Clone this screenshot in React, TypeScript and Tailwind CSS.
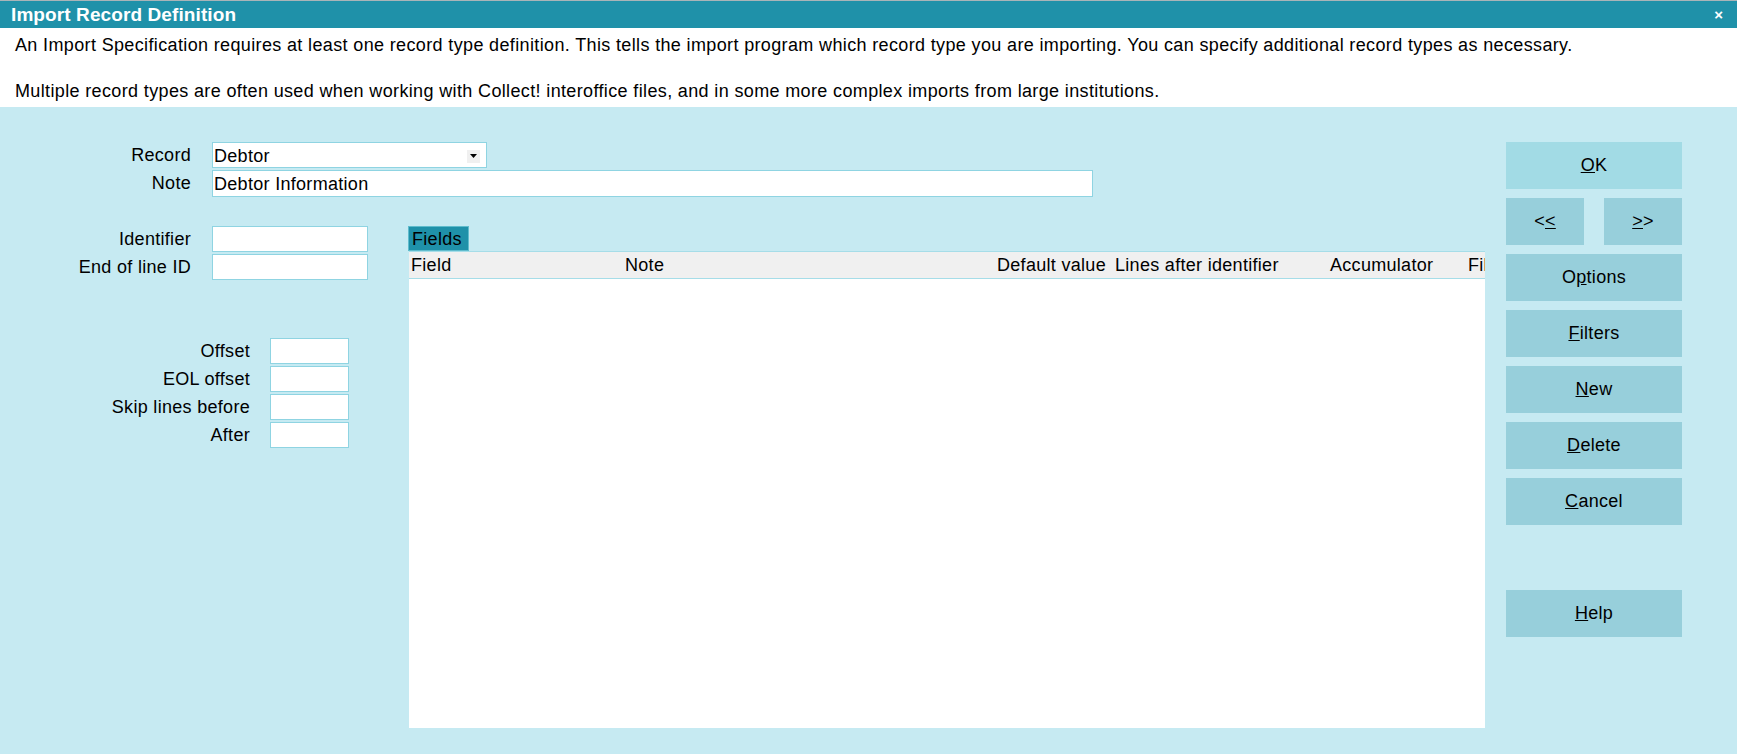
const font = { fontFamily: '"Liberation Sans", Arial, sans-serif' };

function Field({ w }: { w: string }) {
  return <div className={`h-[26px] ${w} bg-white border border-[#8fd4e2]`} />;
}

function Btn({ children, light }: { children: React.ReactNode; light?: boolean }) {
  return (
    <div
      className={`h-[47px] flex items-center justify-center text-[18px] tracking-[0.3px] text-black ${
        light ? "bg-[#a2dbe5]" : "bg-[#97cfdb]"
      }`}
    >
      {children}
    </div>
  );
}

export default function App() {
  return (
    <div className="w-[1737px] h-[754px] flex flex-col bg-[#c6eaf2] overflow-hidden" style={font}>
      {/* title bar */}
      <div className="h-[28px] border-t border-[#a9b4b8] bg-[#1f91a9] flex items-center justify-between px-[11px]">
        <span className="text-white font-bold text-[19px] tracking-[0.1px] leading-none">Import Record Definition</span>
        <span className="text-white font-bold text-[15px] leading-none mr-[3px]">×</span>
      </div>

      {/* description */}
      <div className="h-[79px] bg-white px-[15px] pt-[6px] text-[18px] leading-[23px] tracking-[0.36px] text-black">
        <p>
          An Import Specification requires at least one record type definition. This tells the import program which record type you are
          importing. You can specify additional record types as necessary.
        </p>
        <p className="mt-[23px]">
          Multiple record types are often used when working with Collect! interoffice files, and in some more complex imports from large
          institutions.
        </p>
      </div>

      {/* body */}
      <div className="flex-1 flex pt-[35px] pb-[26px]">
        <div className="flex-1 flex flex-col text-[18px] leading-[22px] tracking-[0.3px] text-black">
          <div className="flex items-center h-[26px]">
            <span className="w-[191px] text-right">Record</span>
            <div className="ml-[21px] h-[26px] w-[275px] bg-white border border-[#8fd4e2] flex items-center justify-between pl-[1px] pr-[6px] pt-[2px]">
              <span>Debtor</span>
              <span className="w-[13px] h-[13px] bg-[#f0f0f0] flex items-center justify-center">
                <svg width="7" height="4" viewBox="0 0 7 4">
                  <path d="M0 0h7L3.5 4z" fill="#000" />
                </svg>
              </span>
            </div>
          </div>
          <div className="flex items-center h-[26px] mt-[2px]">
            <span className="w-[191px] text-right">Note</span>
            <div className="ml-[21px] h-[27px] w-[881px] bg-white border border-[#8fd4e2] flex items-center pl-[1px] pt-[2px]">
              Debtor Information
            </div>
          </div>

          <div className="flex flex-1 mt-[30px]">
            {/* left column */}
            <div className="w-[408px] flex flex-col">
              <div className="flex items-center h-[26px]">
                <span className="w-[191px] text-right">Identifier</span>
                <div className="ml-[21px]">
                  <Field w="w-[156px]" />
                </div>
              </div>
              <div className="flex items-center h-[26px] mt-[2px]">
                <span className="w-[191px] text-right">End of line ID</span>
                <div className="ml-[21px]">
                  <Field w="w-[156px]" />
                </div>
              </div>
              <div className="mt-[58px] flex flex-col gap-[2px]">
                {["Offset", "EOL offset", "Skip lines before", "After"].map((l) => (
                  <div key={l} className="flex items-center h-[26px]">
                    <span className="w-[250px] text-right">{l}</span>
                    <div className="ml-[20px]">
                      <Field w="w-[79px]" />
                    </div>
                  </div>
                ))}
              </div>
            </div>

            {/* fields list */}
            <div className="w-[1077px] flex flex-col">
              <div className="h-[25px] w-[61px] bg-[#1f91a9] border border-[#5fbccd] flex items-center pl-[3px] leading-none">
                Fields
              </div>
              <div className="flex-1 flex flex-col bg-white ml-[1px]">
                <div className="h-[28px] bg-[#f0f0f0] border-t border-b border-[#a6dde8] flex items-center pl-[2px] overflow-hidden whitespace-nowrap">
                  <span className="w-[214px] shrink-0">Field</span>
                  <span className="w-[372px] shrink-0">Note</span>
                  <span className="w-[118px] shrink-0">Default value</span>
                  <span className="w-[215px] shrink-0">Lines after identifier</span>
                  <span className="w-[138px] shrink-0">Accumulator</span>
                  <span className="shrink-0">Filter</span>
                </div>
              </div>
            </div>
          </div>
        </div>

        {/* buttons */}
        <div className="w-[176px] ml-[21px] mr-[55px] flex flex-col gap-[9px]">
          <Btn light>
            <u>O</u>K
          </Btn>
          <div className="flex justify-between">
            <div className="w-[78px]">
              <Btn>
                &lt;<u>&lt;</u>
              </Btn>
            </div>
            <div className="w-[78px]">
              <Btn>
                <u>&gt;</u>&gt;
              </Btn>
            </div>
          </div>
          <Btn>
            O<u>p</u>tions
          </Btn>
          <Btn>
            <u>F</u>ilters
          </Btn>
          <Btn>
            <u>N</u>ew
          </Btn>
          <Btn>
            <u>D</u>elete
          </Btn>
          <Btn>
            <u>C</u>ancel
          </Btn>
          <div className="h-[47px]" />
          <Btn>
            <u>H</u>elp
          </Btn>
        </div>
      </div>
    </div>
  );
}
